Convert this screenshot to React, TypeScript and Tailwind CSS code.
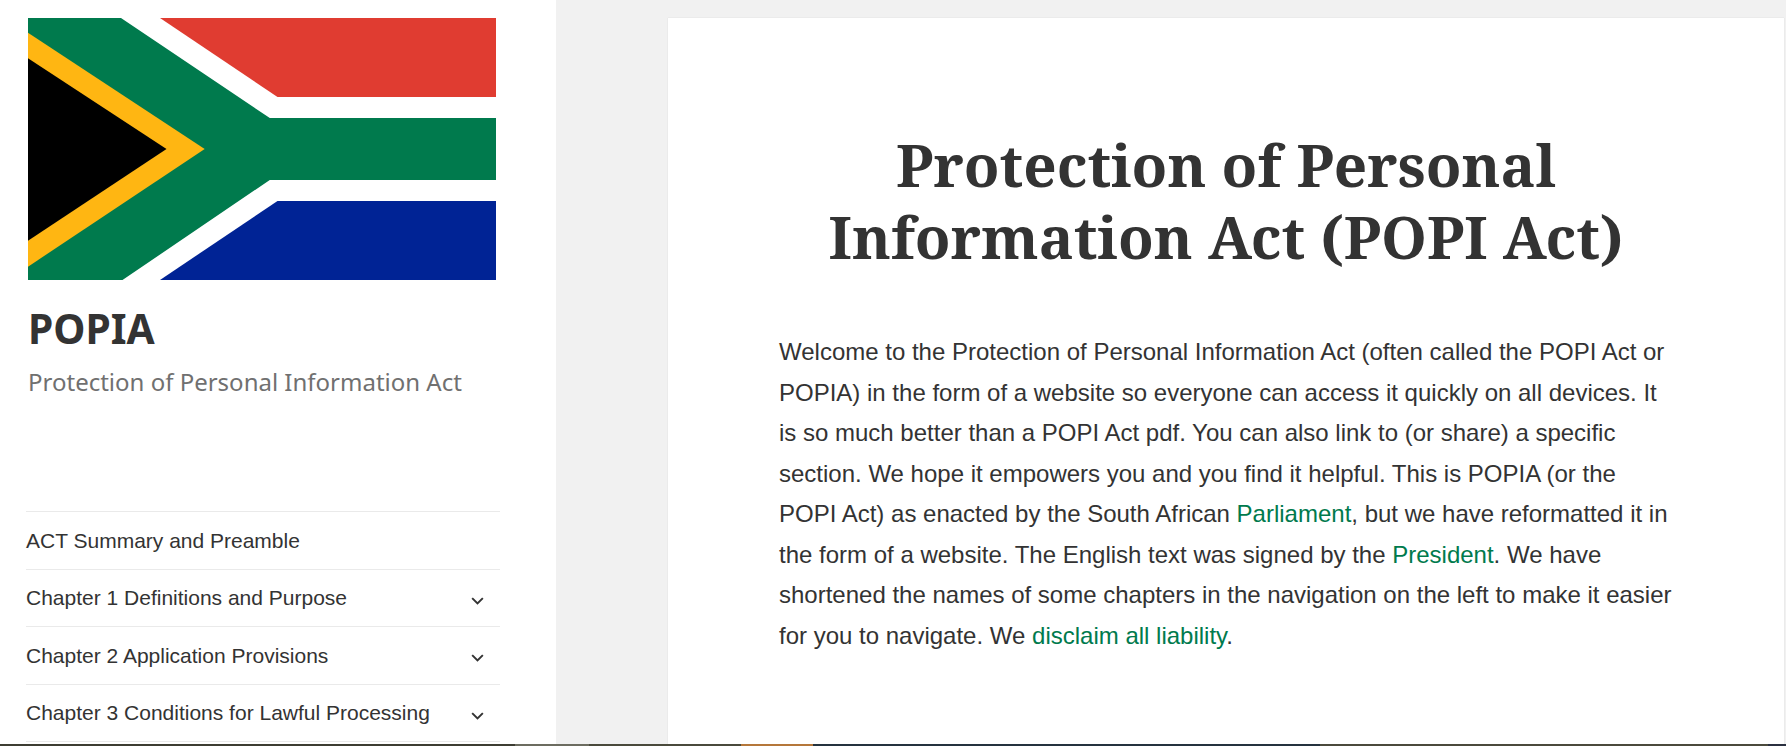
const navItems = [
  { label: 'ACT Summary and Preamble', sub: false },
  { label: 'Chapter 1 Definitions and Purpose', sub: true },
  { label: 'Chapter 2 Application Provisions', sub: true },
  { label: 'Chapter 3 Conditions for Lawful Processing', sub: true },
]

function Flag() {
  return (
    <svg viewBox="0 0 468 262" className="block h-[262px] w-[468px]">
      <rect width="468" height="262" fill="#ffffff" />
      <polygon points="132,0 468,0 468,79 249.5,79" fill="#e03c31" />
      <polygon points="132,262 249.5,183 468,183 468,262" fill="#002395" />
      <polygon points="0,0 93,0 241.8,100 468,100 468,162 241.8,162 94.5,262 0,262" fill="#007a4d" />
      <polygon points="0,14.7 176.7,131 0,248.7" fill="#ffb612" />
      <polygon points="0,40.3 138.5,131 0,222.7" fill="#000000" />
    </svg>
  )
}

function Chevron() {
  return (
    <svg viewBox="0 0 14 9" className="mt-[6px] h-[8px] w-[13px]" fill="none" stroke="#333333" strokeWidth="2.2">
      <path d="M1 1.2 L7 7.2 L13 1.2" />
    </svg>
  )
}

export default function App() {
  return (
    <div className="flex h-[746px] flex-col overflow-hidden bg-[#f1f1f1] font-['Liberation_Sans',sans-serif]">
      <div className="flex min-h-0 flex-1">
        <aside className="w-[556px] shrink-0 bg-white pt-[18px]">
          <div className="pl-[28px]">
            <Flag />
          </div>
          <div className="pl-[28px] pt-[22px] font-['Noto_Sans',sans-serif]">
            <h2 className="text-[40.7px] leading-[52px] font-bold text-[#333333]">POPIA</h2>
            <p className="mt-[10px] text-[24px] leading-[36px] text-[#707070]">Protection of Personal Information Act</p>
          </div>
          <nav className="mx-[26px] mt-[111px] w-[474px] border-t border-[#eaeaea]">
            {navItems.map((item) => (
              <div key={item.label} className="flex h-[57.5px] items-center justify-between border-b border-[#eaeaea] pr-[16px] text-[21px] text-[#333333]">
                <span>{item.label}</span>
                {item.sub && <Chevron />}
              </div>
            ))}
          </nav>
        </aside>
        <main className="min-w-0 flex-1 pt-[18px] pr-[2px] pl-[112px]">
          <article className="h-full bg-white px-[111px] pt-[111px] shadow-[0_0_1px_rgba(0,0,0,0.15)]">
            <h1 className="text-center font-['Noto_Serif','DejaVu_Serif',serif] text-[58.4px] leading-[72px] font-bold text-[#333333]">
              Protection of Personal Information Act (POPI Act)
            </h1>
            <p className="mt-[59px] text-[24px] leading-[40.5px] text-[#333333]">
              Welcome to the Protection of Personal Information Act (often called the POPI Act or POPIA) in the form of a website so everyone can access it quickly on all devices. It is so much better than a POPI Act pdf. You can also link to (or share) a specific section. We hope it empowers you and you find it helpful. This is POPIA (or the POPI Act) as enacted by the South African <a className="text-[#007a4d]">Parliament</a>, but we have reformatted it in the form of a website. The English text was signed by the <a className="text-[#007a4d]">President</a>. We have shortened the names of some chapters in the navigation on the left to make it easier for you to navigate. We <a className="text-[#007a4d]">disclaim all liability</a>.
            </p>
          </article>
        </main>
      </div>
      <div className="flex h-[2px] shrink-0">
        <div className="w-[515px] bg-[#3d3d33]" />
        <div className="w-[74px] bg-[#6c6c60]" />
        <div className="w-[152px] bg-[#4a4a3c]" />
        <div className="w-[72px] bg-[#b5773a]" />
        <div className="w-[507px] bg-[#25333f]" />
        <div className="w-[448px] bg-[#4b4a3c]" />
        <div className="flex-1 bg-[#2b3040]" />
      </div>
    </div>
  )
}
